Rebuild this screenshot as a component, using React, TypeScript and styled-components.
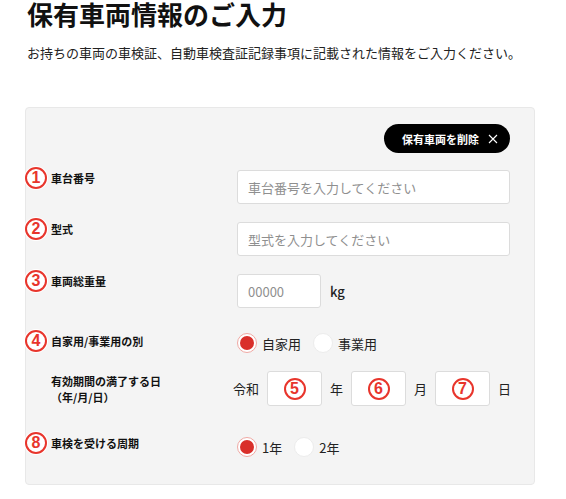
import React from "react";
import styled, { createGlobalStyle } from "styled-components";

const Global = createGlobalStyle`
  html, body { margin: 0; padding: 0; background: #fff; }
  body { font-family: "Noto Sans CJK JP", "Noto Sans", sans-serif; color: #111; }
  * { box-sizing: border-box; }
`;

const Page = styled.div`
  padding: 0 31px 0 25px;
`;

const Title = styled.h1`
  margin: 0 0 0 2px;
  font-size: 26px;
  line-height: 28px;
  font-weight: 700;
  color: #111;
`;

const Lead = styled.p`
  margin: 15px 0 0 2px;
  font-size: 13px;
  line-height: 20px;
  color: #222;
`;

const Panel = styled.section`
  margin-top: 44px;
  background: #f4f4f4;
  border: 1px solid #e8e8e8;
  border-radius: 4px;
  padding: 16px 24px 20px 0;
`;

const Toolbar = styled.div`
  display: flex;
  justify-content: flex-end;
`;

const DeleteButton = styled.button`
  display: flex;
  align-items: center;
  gap: 9px;
  height: 29px;
  padding: 0 12px 0 18px;
  border: none;
  border-radius: 15px;
  background: #000;
  color: #fff;
  font-family: inherit;
  font-size: 11px;
  font-weight: 700;
  cursor: pointer;
`;

const Row = styled.div<{ $mt: number; $h: number }>`
  display: grid;
  grid-template-columns: 211px 1fr;
  align-items: start;
  margin-top: ${(p) => p.$mt}px;
  min-height: ${(p) => p.$h}px;
`;

const Label = styled.div<{ $shift: number }>`
  position: relative;
  margin-top: ${(p) => p.$shift}px;
  padding-left: 25px;
  font-size: 11px;
  line-height: 22px;
  font-weight: 700;
  color: #111;
`;

const LabelLines = styled.div`
  line-height: 16px;
`;

const Mark = styled.span<{ $over?: boolean }>`
  display: inline-flex;
  align-items: center;
  justify-content: center;
  width: 22px;
  height: 22px;
  border: 2px solid #e8352c;
  border-radius: 50%;
  background: #fff;
  color: #e8352c;
  font-family: "Liberation Sans", Arial, sans-serif;
  font-size: 16px;
  font-weight: 700;
  line-height: 1;
  box-shadow: 0 0 0 1px #fff;
  ${(p) =>
    p.$over &&
    `
    position: absolute;
    left: -1px;
    top: 0;
  `}
`;

const Field = styled.div<{ $h: number; $pull?: boolean }>`
  display: flex;
  align-items: center;
  gap: 8px;
  height: ${(p) => p.$h}px;
  margin-left: ${(p) => (p.$pull ? -4 : 0)}px;
`;

const TextInput = styled.input<{ $w?: number }>`
  width: ${(p) => (p.$w ? `${p.$w}px` : "100%")};
  height: 34px;
  padding: 0 10px;
  border: 1px solid #dcdcdc;
  border-radius: 3px;
  background: #fff;
  font-family: inherit;
  font-size: 13px;
  color: #222;
  &::placeholder { color: #8f8f8f; }
`;

const Unit = styled.span<{ $bold?: boolean }>`
  flex-shrink: 0;
  white-space: nowrap;
  font-size: 13px;
  font-weight: ${(p) => (p.$bold ? 500 : 400)};
  color: #222;
  margin-left: ${(p) => (p.$bold ? 1 : 0)}px;
`;

const DateBox = styled.div`
  flex-shrink: 0;
  display: flex;
  align-items: center;
  justify-content: center;
  width: 55px;
  height: 35px;
  border: 1px solid #dcdcdc;
  border-radius: 3px;
  background: #fff;
`;

const RadioGroup = styled.div`
  display: flex;
  align-items: center;
  gap: 12px;
`;

const RadioOption = styled.label`
  display: flex;
  align-items: center;
  gap: 5px;
  font-size: 13px;
  color: #222;
`;

const RadioDot = styled.span<{ $on?: boolean }>`
  position: relative;
  width: 20px;
  height: 20px;
  border-radius: 50%;
  background: #fff;
  border: 1px solid ${(p) => (p.$on ? "#f0a9a4" : "#ececec")};
  &::after {
    content: "";
    display: ${(p) => (p.$on ? "block" : "none")};
    position: absolute;
    left: 2px;
    top: 2px;
    width: 14px;
    height: 14px;
    border-radius: 50%;
    background: #d92f2a;
  }
`;

const CloseIcon = () => (
  <svg width="10" height="10" viewBox="0 0 10 10" aria-hidden>
    <path d="M1 1 L9 9 M9 1 L1 9" stroke="#fff" strokeWidth="1.1" fill="none" />
  </svg>
);

const Radio = ({ on, children }: { on?: boolean; children: React.ReactNode }) => (
  <RadioOption>
    <RadioDot $on={on} />
    {children}
  </RadioOption>
);

export default function App() {
  return (
    <Page>
      <Global />
      <Title>保有車両情報のご入力</Title>
      <Lead>お持ちの車両の車検証、自動車検査証記録事項に記載された情報をご入力ください。</Lead>
      <Panel>
        <Toolbar>
          <DeleteButton>
            保有車両を削除
            <CloseIcon />
          </DeleteButton>
        </Toolbar>

        <Row $mt={17} $h={34}>
          <Label $shift={-3}>
            <Mark $over>1</Mark>
            車台番号
          </Label>
          <Field $h={34}>
            <TextInput placeholder="車台番号を入力してください" />
          </Field>
        </Row>

        <Row $mt={18} $h={34}>
          <Label $shift={-4}>
            <Mark $over>2</Mark>
            型式
          </Label>
          <Field $h={34}>
            <TextInput placeholder="型式を入力してください" />
          </Field>
        </Row>

        <Row $mt={18} $h={34}>
          <Label $shift={-4}>
            <Mark $over>3</Mark>
            車両総重量
          </Label>
          <Field $h={34}>
            <TextInput $w={84} placeholder="00000" />
            <Unit $bold>kg</Unit>
          </Field>
        </Row>

        <Row $mt={18} $h={34}>
          <Label $shift={4}>
            <Mark $over>4</Mark>
            自家用/事業用の別
          </Label>
          <Field $h={34}>
            <RadioGroup>
              <Radio on>自家用</Radio>
              <Radio>事業用</Radio>
            </RadioGroup>
          </Field>
        </Row>

        <Row $mt={11} $h={35}>
          <Label $shift={2}>
            <LabelLines>
              有効期間の満了する日
              <br />
              （年/月/日）
            </LabelLines>
          </Label>
          <Field $h={35} $pull>
            <Unit>令和</Unit>
            <DateBox>
              <Mark>5</Mark>
            </DateBox>
            <Unit>年</Unit>
            <DateBox>
              <Mark>6</Mark>
            </DateBox>
            <Unit>月</Unit>
            <DateBox>
              <Mark>7</Mark>
            </DateBox>
            <Unit>日</Unit>
          </Field>
        </Row>

        <Row $mt={24} $h={34}>
          <Label $shift={2}>
            <Mark $over>8</Mark>
            車検を受ける周期
          </Label>
          <Field $h={34}>
            <RadioGroup>
              <Radio on>1年</Radio>
              <Radio>2年</Radio>
            </RadioGroup>
          </Field>
        </Row>
      </Panel>
    </Page>
  );
}
